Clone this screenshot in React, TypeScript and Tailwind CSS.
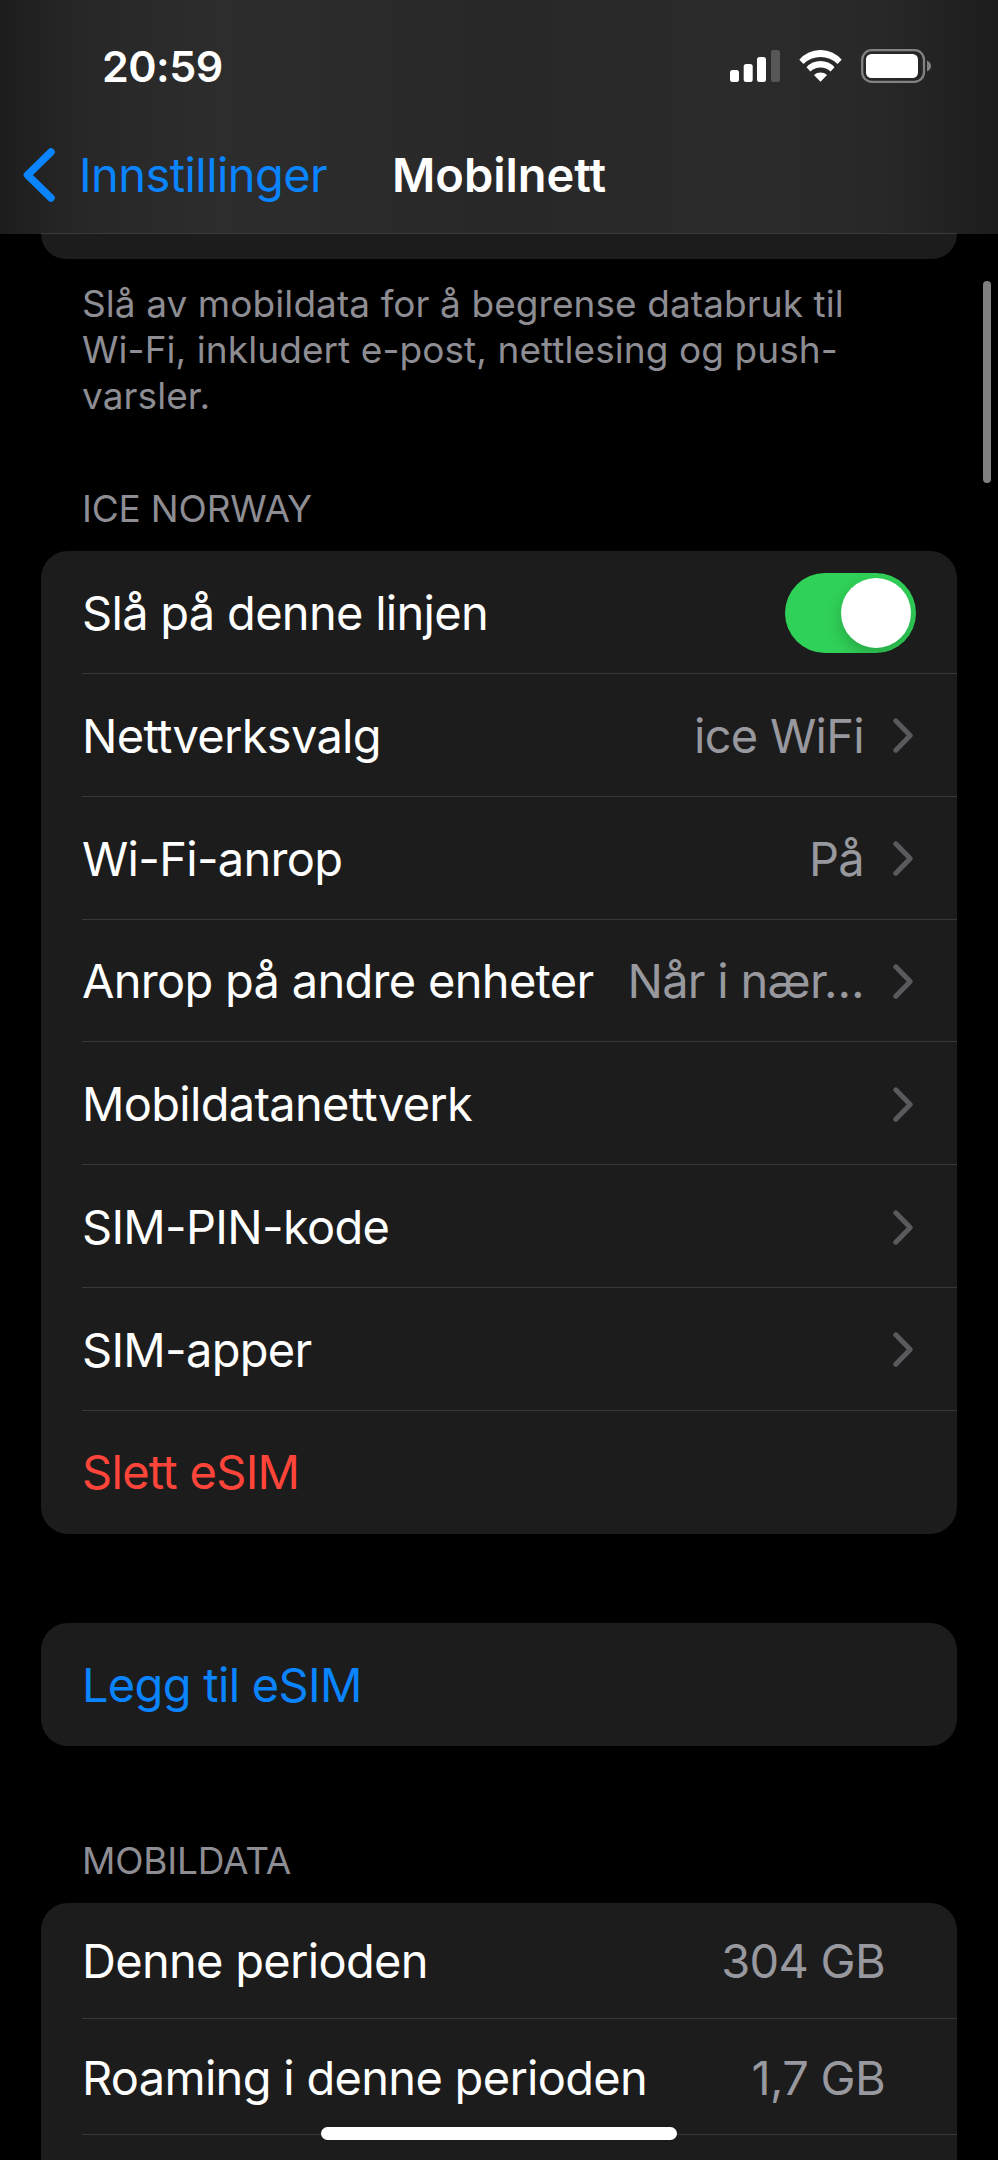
import { useState, type ReactNode } from "react";
import clsx from "clsx";

type Row = {
  label: string;
  value?: string;
  link?: boolean;
  tone?: "default" | "danger" | "action";
};

const LINE_ROWS: Row[] = [
  { label: "Nettverksvalg", value: "ice WiFi", link: true },
  { label: "Wi-Fi-anrop", value: "På", link: true },
  { label: "Anrop på andre enheter", value: "Når i nær…", link: true },
  { label: "Mobildatanettverk", link: true },
  { label: "SIM-PIN-kode", link: true },
  { label: "SIM-apper", link: true },
  { label: "Slett eSIM", tone: "danger" },
];

const USAGE_ROWS: Row[] = [
  { label: "Denne perioden", value: "304 GB" },
  { label: "Roaming i denne perioden", value: "1,7 GB" },
];

function SignalIcon() {
  return (
    <svg width="50" height="32" viewBox="0 0 50 32" fill="#fff" aria-hidden="true">
      <rect x="0" y="20" width="9" height="12" rx="2.5" />
      <rect x="13.7" y="14" width="9" height="18" rx="2.5" />
      <rect x="27" y="7" width="9" height="25" rx="2.5" />
      <rect x="41" y="0" width="9" height="32" rx="2.5" fill="#565656" />
    </svg>
  );
}

function WifiIcon() {
  return (
    <svg width="43" height="32" viewBox="0 0 43 32" fill="#fff" aria-hidden="true">
      <path d="M0.3 9.7A28 28 0 0 1 42.7 9.7L38.5 14A24.2 24.2 0 0 0 4.5 14Z" />
      <path d="M7.5 17.3A18.6 18.6 0 0 1 35.5 17.3L31.6 21.6A14.4 14.4 0 0 0 11.4 21.6Z" />
      <path d="M14.9 25A10 10 0 0 1 28.1 25L21.5 31.8Z" />
    </svg>
  );
}

function BatteryIcon() {
  return (
    <svg width="71" height="34" viewBox="0 0 71 34" aria-hidden="true">
      <rect x="1.2" y="1.2" width="61.8" height="31.6" rx="9.5" fill="none" stroke="#828282" strokeWidth="2.3" />
      <rect x="5" y="5" width="52" height="24" rx="5.5" fill="#fff" />
      <path d="M66 11.5C68.5 12.6 70 14.5 70 17S68.5 21.4 66 22.5Z" fill="#828282" />
    </svg>
  );
}

function Chevron() {
  return (
    <svg className="ml-[29px] shrink-0" width="20" height="35" viewBox="0 0 20 35" fill="none" aria-hidden="true">
      <path d="M2.8 2.8L17.2 17.5L2.8 32.2" stroke="#5a5a5e" strokeWidth="5" strokeLinecap="round" strokeLinejoin="round" />
    </svg>
  );
}

function Card({ children, className }: { children: ReactNode; className?: string }) {
  return <div className={clsx("mx-[41px] overflow-hidden rounded-[27px] bg-[#1c1c1c] pl-[41px]", className)}>{children}</div>;
}

function ListRow({ row, last, compact }: { row: Row; last?: boolean; compact?: boolean }) {
  return (
    <div
      className={clsx(
        "flex items-center text-[47px] leading-[58px] tracking-[-0.015em] whitespace-nowrap",
        compact ? "h-[116.3px] pr-[72px]" : "h-[122.85px] pr-[44px]",
        !last && "border-b border-[#38383a]",
        row.tone !== "danger" && "pt-[2px]",
      )}
    >
      <span
        className={clsx(
          "flex-1",
          row.tone === "danger" && "text-[#ff453a]",
          row.tone === "action" && "text-[#0a84ff]",
        )}
      >
        {row.label}
      </span>
      {row.value && <span className="text-[#98989f]">{row.value}</span>}
      {row.link && <Chevron />}
    </div>
  );
}

function SectionTitle({ children }: { children: ReactNode }) {
  return <h2 className="px-[82px] text-[37px] leading-[46px] tracking-[-0.005em] text-[#8d8d93] uppercase">{children}</h2>;
}

export default function App() {
  const [lineOn, setLineOn] = useState(true);

  return (
    <div className="relative h-[2160px] w-[998px] overflow-hidden bg-black font-['Inter',sans-serif] text-white">
      <header className="h-[234px] bg-[linear-gradient(90deg,#1d1d1d_0%,#272727_8%,#2d2d2d_22%,#2b2b2b_34%,#282828_50%,#2b2b2b_76%,#282828_88%,#1d1d1d_100%)]">
        <div className="flex h-[132px] items-center justify-between pr-[66px] pl-[102px]">
          <span className="text-[43px] leading-[52px] font-semibold tracking-[-0.012em]">20:59</span>
          <div className="flex items-center">
            <SignalIcon />
            <div className="w-[19px]" />
            <WifiIcon />
            <div className="w-[19px]" />
            <BatteryIcon />
          </div>
        </div>
        <nav className="grid h-[86px] grid-cols-[1fr_auto_1fr] items-center px-[23px]">
          <button className="flex items-center text-[47px] leading-[58px] tracking-[-0.012em] text-[#0a84ff]">
            <svg width="32" height="54" viewBox="0 0 32 54" fill="none" className="mr-[24px]" aria-hidden="true">
              <path d="M28 4L4.5 27L28 50" stroke="#0a84ff" strokeWidth="7.5" strokeLinecap="round" strokeLinejoin="round" />
            </svg>
            Innstillinger
          </button>
          <h1 className="text-[47px] leading-[58px] font-semibold">Mobilnett</h1>
          <span />
        </nav>
        <div className="mx-[41px] mt-[15px] h-px bg-[#3a3a3a]" />
      </header>

      <main>
        <div className="mx-[41px] h-[25px] rounded-b-[25px] bg-[#1c1c1c]" />
        <p className="mt-[22px] px-[82px] text-[37px] leading-[46.2px] tracking-[0.002em] text-[#8d8d93]">
          Slå av mobildata for å begrense databruk til
          <br />
          Wi-Fi, inkludert e-post, nettlesing og push-
          <br />
          varsler.
        </p>

        <div className="mt-[66px]">
          <SectionTitle>Ice Norway</SectionTitle>
          <Card className="mt-[19.4px]">
            <div className="flex h-[122.85px] items-center justify-between border-b border-[#38383a] pt-[2px] pr-[41px]">
              <span className="text-[47px] leading-[58px] tracking-[-0.015em]">Slå på denne linjen</span>
              <button
                role="switch"
                aria-checked={lineOn}
                aria-label="Slå på denne linjen"
                onClick={() => setLineOn(!lineOn)}
                className={clsx(
                  "flex h-[80px] w-[131px] items-center overflow-hidden rounded-full px-[5px]",
                  lineOn ? "justify-end bg-[#30d158]" : "justify-start bg-[#39393d]",
                )}
              >
                <span className="size-[70px] rounded-full bg-white shadow-[0_7px_16px_rgba(0,0,0,0.2)]" />
              </button>
            </div>
            {LINE_ROWS.map((row, i) => (
              <ListRow key={row.label} row={row} last={i === LINE_ROWS.length - 1} />
            ))}
          </Card>
        </div>

        <Card className="mt-[89.2px]">
          <ListRow row={{ label: "Legg til eSIM", tone: "action" }} last />
        </Card>

        <div className="mt-[92px]">
          <SectionTitle>Mobildata</SectionTitle>
          <Card className="mt-[19px] h-[400px]">
            {USAGE_ROWS.map((row) => (
              <ListRow key={row.label} row={row} compact />
            ))}
          </Card>
        </div>
      </main>

      {/* scroll indicator and home bar float over the list */}
      <div className="absolute top-[281px] right-[7.5px] h-[202px] w-2 rounded-full bg-[#7f7f7f]" />
      <div className="absolute bottom-[20.5px] left-[321px] h-[13px] w-[356px] rounded-full bg-white" />
    </div>
  );
}
